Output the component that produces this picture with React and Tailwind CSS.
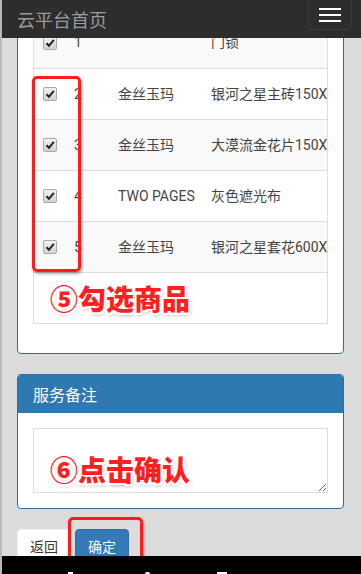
const rows = [
  { no: "1", brand: "", name: "门锁", striped: true },
  { no: "2", brand: "金丝玉玛", name: "银河之星主砖150X600", striped: false },
  { no: "3", brand: "金丝玉玛", name: "大漠流金花片150X600", striped: true },
  { no: "4", brand: "TWO PAGES", name: "灰色遮光布", striped: false },
  { no: "5", brand: "金丝玉玛", name: "银河之星套花600X600", striped: true },
];

const outline =
  "[text-shadow:-2px_-2px_0_#fff,2px_-2px_0_#fff,-2px_2px_0_#fff,2px_2px_0_#fff,0_2px_0_#fff,0_-2px_0_#fff,2px_0_0_#fff,-2px_0_0_#fff,1px_2px_4px_rgba(0,0,0,0.45)]";

function Check() {
  return (
    <span className="flex h-[14px] w-[14px] items-center justify-center rounded-[2px] border border-[#a8a8a8] bg-gradient-to-b from-[#f2f2f2] to-[#d2d2d2]">
      <svg width="10" height="10" viewBox="0 0 10 10">
        <path d="M1.5 5.2 L4 7.8 L8.8 1.8" fill="none" stroke="#222" strokeWidth="2" />
      </svg>
    </span>
  );
}

export default function App() {
  return (
    <div className="relative h-[574px] w-[361px] overflow-hidden border-l-2 border-[#b8b8b8] bg-[#dcdcdc] font-['Roboto','Noto_Sans_CJK_SC',sans-serif]">
      <div className="-ml-[2px] px-[17px]">
        {/* goods panel, top is under the navbar */}
        <div className="rounded-b-[4px] border border-[#2e6da4] bg-white px-[15px] pb-[29px] pt-[15px]">
          <div className="overflow-hidden border border-[#ddd] text-[14px] text-[#444]">
            {rows.map((r, i) => (
              <div
                key={r.no}
                className={`flex h-[51px] items-center ${i > 0 ? "border-t border-[#ddd]" : ""} ${r.striped ? "bg-[#f9f9f9]" : "bg-white"}`}
              >
                <div className="w-[40px] shrink-0 pl-[9px]">
                  <Check />
                </div>
                <div className="w-[44px] shrink-0">{r.no}</div>
                <div className="w-[93px] shrink-0 whitespace-nowrap">{r.brand}</div>
                <div className="whitespace-nowrap">{r.name}</div>
              </div>
            ))}
            <div className="flex h-[51px] items-center border-t border-[#ddd] pl-[16px]">
              <span className={`font-['Noto_Sans_CJK_SC',sans-serif] text-[28px] font-black leading-none text-[#ff1f1f] ${outline}`}>
                ⑤勾选商品
              </span>
            </div>
          </div>
        </div>

        {/* remark panel */}
        <div className="mt-[20px] rounded-[4px] border border-[#2e6da4] bg-white">
          <div className="flex h-[38px] items-center rounded-t-[3px] bg-[#2f79b2] px-[15px] font-['Noto_Sans_CJK_SC',sans-serif] text-[16px] text-white">
            服务备注
          </div>
          <div className="p-[15px]">
            <div className="relative">
              <textarea readOnly className="block h-[65px] w-full resize-y border border-[#ddd] bg-white outline-none" />
              <span className={`absolute left-[17px] top-[27px] font-['Noto_Sans_CJK_SC',sans-serif] text-[28px] font-black leading-none text-[#ff1f1f] ${outline}`}>
                ⑥点击确认
              </span>
            </div>
          </div>
        </div>

        <div className="mt-[20px] flex gap-[4px] font-['Noto_Sans_CJK_SC',sans-serif] text-[14px]">
          <button className="h-[34px] rounded-[4px] border border-[#f0f0f0] bg-white px-[12px] text-[#333]">返回</button>
          <button className="h-[34px] rounded-[4px] border border-[#2e6da4] bg-[#337ab7] px-[12px] text-white">确定</button>
        </div>
      </div>

      {/* navbar fixed over content */}
      <div className="absolute inset-x-0 top-0 flex h-[38px] items-start justify-between bg-[#2d2d2d] pl-[15px] pr-[9px]">
        <span className="mt-[7px] font-['Noto_Sans_CJK_SC',sans-serif] text-[18px] leading-[24px] text-[#9a9a9a]">云平台首页</span>
        <button className="-mt-[4px] flex h-[34px] w-[44px] flex-col items-center gap-[4px] rounded-[4px] border border-[#3c3c3c] pt-[11px]">
          <span className="block h-[2px] w-[22px] bg-white" />
          <span className="block h-[2px] w-[22px] bg-white" />
          <span className="block h-[2px] w-[22px] bg-white" />
        </button>
      </div>

      {/* annotation boxes */}
      <div className="absolute left-[30px] top-[76px] h-[196px] w-[49px] rounded-[5px] border-[3px] border-[#ff1c1c] shadow-[1px_2px_3px_rgba(0,0,0,0.35)]" />
      <div className="absolute left-[66px] top-[517px] h-[47px] w-[75px] rounded-[5px] border-[3px] border-[#ff1c1c] shadow-[1px_2px_3px_rgba(0,0,0,0.35)]" />

      {/* android nav bar */}
      <div className="absolute inset-x-0 bottom-0 h-[18px] bg-black">
        <span className="absolute bottom-0 left-[66px] h-[2px] w-[5px] bg-white" />
        <span className="absolute bottom-0 left-[143px] h-[2px] w-[5px] rounded-t-full bg-white" />
        <span className="absolute bottom-0 left-[215px] h-[2px] w-[10px] bg-white" />
      </div>
    </div>
  );
}
